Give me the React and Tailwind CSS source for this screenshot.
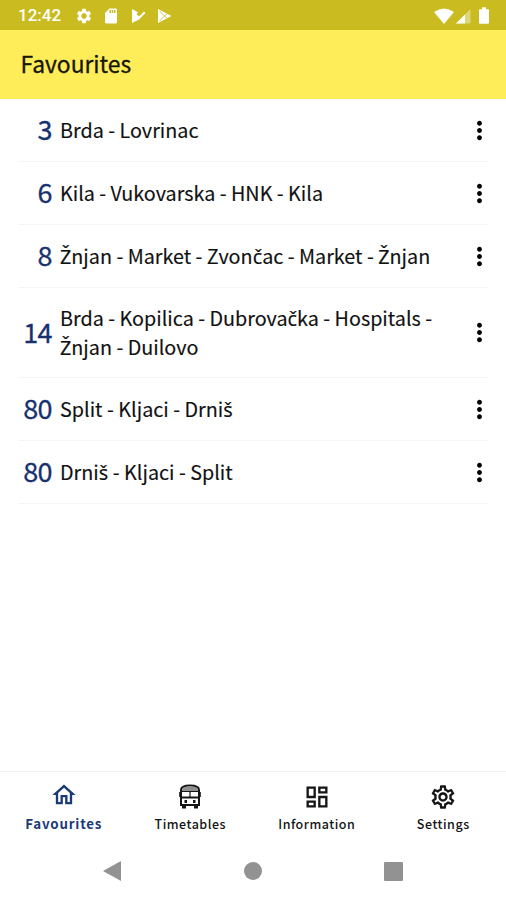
import {
  MdMoreVert,
  MdOutlineDashboard,
  MdOutlineHome,
  MdOutlineSettings,
  MdSdCard,
  MdSettings,
} from 'react-icons/md';

const lines = [
  { number: 3, name: 'Brda - Lovrinac', height: 'h-[63px]' },
  { number: 6, name: 'Kila - Vukovarska - HNK - Kila', height: 'h-[63px]' },
  { number: 8, name: 'Žnjan - Market - Zvončac - Market - Žnjan', height: 'h-[63px]' },
  { number: 14, name: 'Brda - Kopilica - Dubrovačka - Hospitals - Žnjan - Duilovo', height: 'h-[90px]' },
  { number: 80, name: 'Split - Kljaci - Drniš', height: 'h-[63px]' },
  { number: 80, name: 'Drniš - Kljaci - Split', height: 'h-[63px]' },
];

const BusIcon = ({ className }) => (
  <svg className={className} viewBox="0 0 28 28" fill="none" stroke="currentColor" strokeWidth="2">
    <path d="M5 7c0-3.500 3-4.500 9-4.500s9 1 9 4.500v15H5z" />
    <path d="M6 8c0-3.500 2-4.500 8-4.500s8 1 8 4.500z" fill="#909090" stroke="none" />
    <path d="M5 8.500h18M14 8v6" strokeWidth="1.200" />
    <path d="M5 14.500h18" />
    <path d="M3.700 9v5M24.300 9v5" strokeWidth="1" />
    <path d="M8.500 17h2.500v3H8.500zM17 17h2.500v3H17zM6 22h4v3.500H6zM18 22h4v3.500h-4z" fill="currentColor" stroke="none" />
  </svg>
);

const tabs = [
  { label: 'Favourites', icon: MdOutlineHome, active: true },
  { label: 'Timetables', icon: BusIcon },
  { label: 'Information', icon: MdOutlineDashboard },
  { label: 'Settings', icon: MdOutlineSettings },
];

const StatusBar = () => (
  <div className="flex h-[30px] items-center bg-[#c9bb20] pl-[18px] pr-[17px] pt-px text-white">
    <span className="w-[57px] font-[Roboto] text-[17px] font-medium leading-none">12:42</span>
    <MdSettings className="size-[18px]" />
    <MdSdCard className="ml-[9px] size-[18px]" />
    <svg className="ml-[11px] h-[16px] w-[15px]" viewBox="0 0 15 16" fill="currentColor">
      <path d="M1 1l6 3.200L5.500 6 8 8.500 13 3.500l1.500 1.500L8 11.500 1 15z" />
    </svg>
    <svg className="ml-[11px] h-[16px] w-[15px]" viewBox="0 0 15 16" fill="currentColor">
      <path d="M1 1l13.500 7L1 15z" />
      <path d="M2.500 3l5 5-5 5M7.500 8l3-2.500M7.500 8l3 2.500" fill="none" stroke="#c9bb20" strokeWidth="0.8" />
    </svg>
    <svg className="ml-auto h-[16px] w-[20px]" viewBox="0 0 20 16" fill="currentColor">
      <path d="M0 4q10-7 20 0L10 16z" />
    </svg>
    <svg className="ml-[2px] h-[16px] w-[15px]" viewBox="0 0 15 16" fill="currentColor">
      <path d="M0 15.500L14.500 1v14.500z" opacity="0.4" />
      <path d="M0 15.500l9-9v9z" />
    </svg>
    <svg className="ml-[8px] h-[17px] w-[10px]" viewBox="0 0 11 18" fill="currentColor">
      <path d="M1 2h2.500V0h4v2H10q1 0 1 1v14q0 1-1 1H1q-1 0-1-1V3q0-1 1-1z" />
    </svg>
  </div>
);

// The CJK family has no caron letters, so those come from Noto Sans
const LineName = ({ name }) =>
  name.split(/([Žčš])/).map((part, i) =>
    i % 2 ? (
      <span key={i} className="font-['Noto_Sans',sans-serif]">{part}</span>
    ) : (
      part
    )
  );

const LineRow = ({ line }) => (
  <li className={`flex items-center border-b border-[#f5f5f5] ${line.height}`}>
    <span className="w-[34px] pb-[3px] text-right text-[27px] leading-none tracking-[-0.6px] text-[#17316f] [-webkit-text-stroke:0.3px]">
      {line.number}
    </span>
    <span className="ml-2 w-[385px] text-[19.75px] leading-[28px] text-[#111111] [-webkit-text-stroke:0.15px]">
      <LineName name={line.name} />
    </span>
    <MdMoreVert className="-mr-[6px] ml-auto size-[29px] text-black" />
  </li>
);

const TabBar = () => (
  <nav className="flex h-[71px] border-t border-[#f3f3f3]">
    {tabs.map(({ label, icon: Icon, active }) => (
      <button
        key={label}
        className={`flex flex-1 flex-col items-center pl-px ${active ? 'pt-[9px] text-[#1d3a78]' : 'pt-[11px] text-[#151515]'}`}
      >
        <Icon className="size-[28px]" />
        <span
          className={
            active
              ? 'pt-[2px] text-[13.3px] font-bold leading-[26px] tracking-[0.8px]'
              : 'text-[12.5px] font-medium leading-[26px] tracking-[0.5px]'
          }
        >
          {label}
        </span>
      </button>
    ))}
  </nav>
);

const SystemNav = () => (
  <div className="flex h-[58px] items-center justify-between px-[103px] text-[#929292]">
    <svg className="h-[20px] w-[18px]" viewBox="0 0 18 20" fill="currentColor">
      <path d="M18 0v20L0 10z" />
    </svg>
    <div className="size-[18px] rounded-full bg-current"></div>
    <div className="size-[19px] rounded-[1px] bg-current"></div>
  </div>
);

const App = () => {
  return (
    <div className="flex h-[900px] w-[506px] flex-col bg-white font-['Noto_Sans_CJK_SC',sans-serif]">
      <StatusBar />
      <header className="flex h-[69px] items-center bg-[#ffec59] pl-[20.5px]">
        <h1 className="text-[22.8px] font-normal leading-none text-[#16160a] [-webkit-text-stroke:0.3px]">
          Favourites
        </h1>
      </header>
      <ul className="mx-[18px] flex-1">
        {lines.map((line, i) => (
          <LineRow key={i} line={line} />
        ))}
      </ul>
      <TabBar />
      <SystemNav />
    </div>
  );
};

export default App;
